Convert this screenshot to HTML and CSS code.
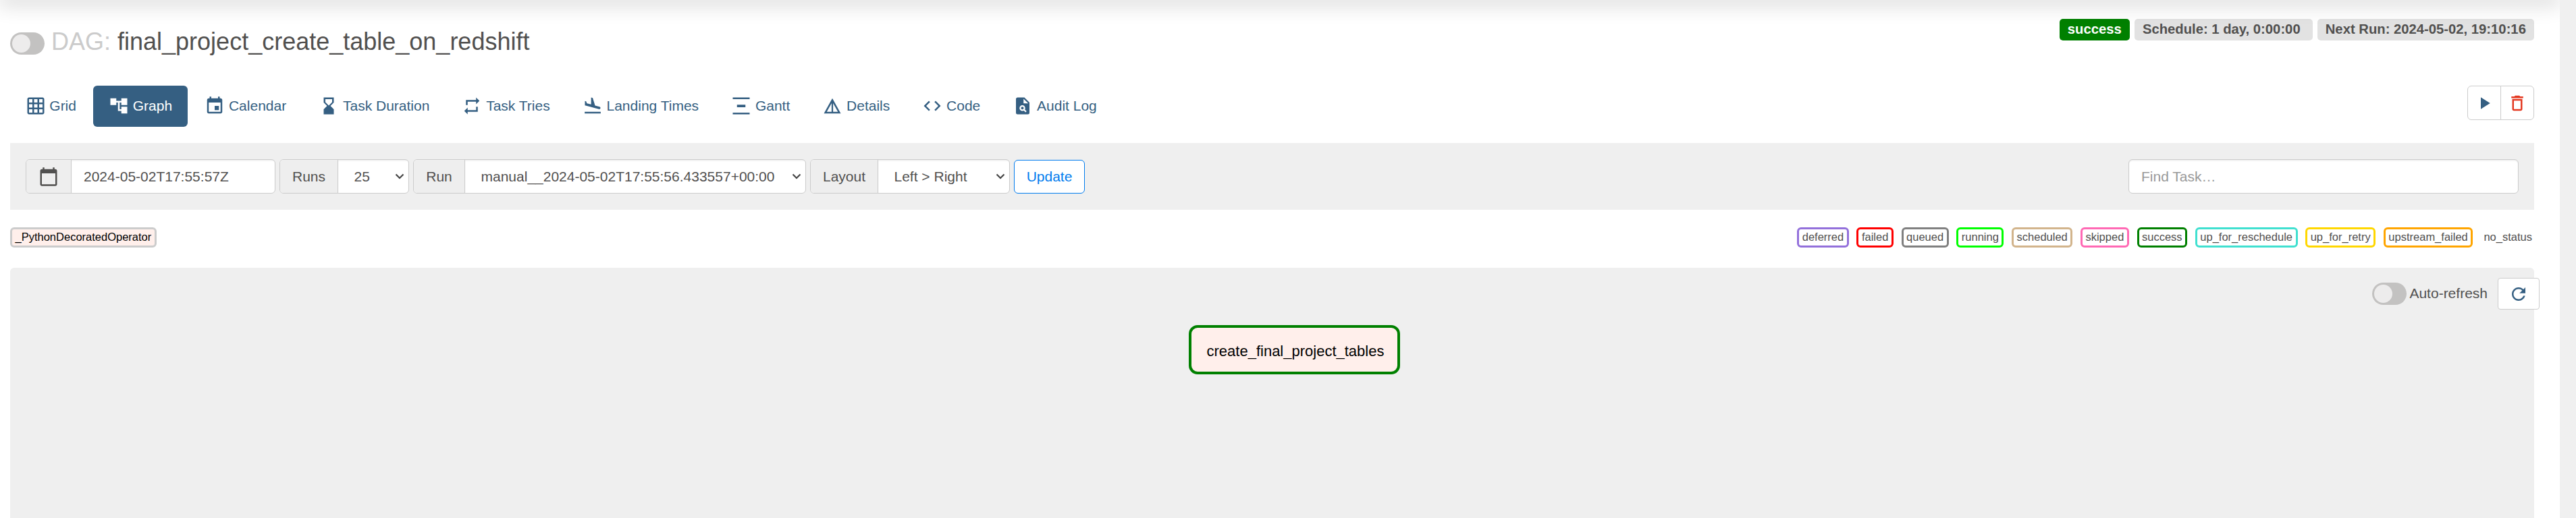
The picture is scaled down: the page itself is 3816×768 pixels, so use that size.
FILE: index.html
```html
<!DOCTYPE html>
<html lang="en">
<head>
<meta charset="utf-8">
<title>final_project_create_table_on_redshift - Graph</title>
<link rel="stylesheet" href="styles.css">
</head>
<body>
<div class="page">
  <div class="top-shadow"></div>
  <header class="head">
    <div class="dag-title">
      <span class="switch"></span>
      <h1 class="dag-name"><span class="muted">DAG:</span> final_project_create_table_on_redshift</h1>
    </div>
    <div class="labels">
      <span class="label label-success">success</span>
      <span class="label label-schedule">Schedule: 1 day, 0:00:00</span>
      <span class="label">Next Run: 2024-05-02, 19:10:16</span>
    </div>
  </header>

  <div class="nav-row">
    <nav class="pills">
      <a class="pill"><svg class="icon" viewBox="0 0 24 24"><path d="M20 2H4c-1.100 0-2 .9-2 2v16c0 1.100.9 2 2 2h16c1.100 0 2-.9 2-2V4c0-1.100-.9-2-2-2zM8 20H4v-4h4v4zm0-6H4v-4h4v4zm0-6H4V4h4v4zm6 12h-4v-4h4v4zm0-6h-4v-4h4v4zm0-6h-4V4h4v4zm6 12h-4v-4h4v4zm0-6h-4v-4h4v4zm0-6h-4V4h4v4z"/></svg>Grid</a>
      <a class="pill active"><svg class="icon" viewBox="0 0 24 24"><path d="M22 11V3h-7v3H9V3H2v8h7V8h2v10h4v3h7v-8h-7v3h-2V8h2v3z"/></svg>Graph</a>
      <a class="pill"><svg class="icon" viewBox="0 0 24 24"><path d="M17 12h-5v5h5v-5zM16 1v2H8V1H6v2H5c-1.110 0-1.990.9-1.990 2L3 19c0 1.100.89 2 2 2h14c1.100 0 2-.9 2-2V5c0-1.100-.9-2-2-2h-1V1h-2zm3 18H5V8h14v11z"/></svg>Calendar</a>
      <a class="pill"><svg class="icon" viewBox="0 0 24 24"><path d="M6 2v6h.01L6 8.010 10 12l-4 4 .01.01H6V22h12v-5.990h-.01L18 16l-4-4 4-3.990-.01-.01H18V2H6zm2 2h8v3.500l-4 4-4-4V4z"/></svg>Task Duration</a>
      <a class="pill"><svg class="icon" viewBox="0 0 24 24"><path d="M7 7h10v3l4-4-4-4v3H5v6h2V7zm10 10H7v-3l-4 4 4 4v-3h12v-6h-2v4z"/></svg>Task Tries</a>
      <a class="pill"><svg class="icon" viewBox="0 0 24 24"><path d="M2.500 19h19v2h-19zm7.180-5.730l4.350 1.160 5.310 1.420c.8.210 1.620-.26 1.840-1.060.21-.8-.26-1.620-1.060-1.840l-5.310-1.420-2.760-9.020L10.120 2v8.280L5.150 8.950l-.93-2.320-1.450-.39v5.170l1.600.43 5.310 1.430z"/></svg>Landing Times</a>
      <a class="pill"><svg class="icon" viewBox="0 0 24 24"><path d="M2 2h20v2H2zM2 20h20v2H2zM7 10.500h10v3H7z"/></svg>Gantt</a>
      <a class="pill"><svg class="icon" viewBox="0 0 24 24"><path d="M12 3L2 21h20L12 3zm.9 5.800L18.600 19h-5.700V8.800zm-1.800 0V19H5.400l5.700-10.200z"/></svg>Details</a>
      <a class="pill"><svg class="icon" viewBox="0 0 24 24"><path d="M9.400 16.600L4.800 12l4.600-4.600L8 6l-6 6 6 6 1.400-1.400zm5.200 0l4.600-4.600-4.600-4.600L16 6l6 6-6 6-1.400-1.400z"/></svg>Code</a>
      <a class="pill"><svg class="icon" viewBox="0 0 24 24"><path d="M14 2H6a2 2 0 0 0-2 2v16a2 2 0 0 0 2 2h12a2 2 0 0 0 2-2V8z"/><path class="cut" d="M13 3.500V9h5.500z"/><circle class="lens" cx="11.600" cy="14.600" r="2.500"/><path class="lens" d="M13.400 16.400l2.600 2.600"/></svg>Audit Log</a>
    </nav>
    <div class="actions">
      <a class="action"><svg class="icon action-icon" viewBox="0 0 24 24"><path d="M8 5v14l11-7z"/></svg></a>
      <a class="action danger"><svg class="icon action-icon" viewBox="0 0 24 24"><path d="M6 19c0 1.100.9 2 2 2h8c1.100 0 2-.9 2-2V7H6v12zM8 9h8v10H8V9zm7.500-5l-1-1h-5l-1 1H5v2h14V4z"/></svg></a>
    </div>
  </div>

  <div class="filters">
    <div class="group group-date"><span class="addon"><svg class="cal" viewBox="0 0 24 24"><path d="M20 3h-1V1h-2v2H7V1H5v2H4c-1.100 0-2 .9-2 2v16c0 1.100.9 2 2 2h16c1.100 0 2-.9 2-2V5c0-1.100-.9-2-2-2zm0 18H4V8h16v13z"/></svg></span><span class="field">2024-05-02T17:55:57Z</span></div>
    <div class="group group-runs"><span class="addon">Runs</span><span class="field select">25<svg class="chev" viewBox="0 0 14 9"><path d="M1.500 1.500L7 7l5.500-5.500"/></svg></span></div>
    <div class="group group-run"><span class="addon">Run</span><span class="field select">manual__2024-05-02T17:55:56.433557+00:00<svg class="chev" viewBox="0 0 14 9"><path d="M1.500 1.500L7 7l5.500-5.500"/></svg></span></div>
    <div class="group group-layout"><span class="addon">Layout</span><span class="field select">Left &gt; Right<svg class="chev" viewBox="0 0 14 9"><path d="M1.500 1.500L7 7l5.500-5.500"/></svg></span></div>
    <a class="update">Update</a>
    <div class="search">Find Task…</div>
  </div>

  <div class="legend">
    <span class="tag operator">_PythonDecoratedOperator</span>
    <div class="states">
      <span class="tag deferred">deferred</span>
      <span class="tag failed">failed</span>
      <span class="tag queued">queued</span>
      <span class="tag running">running</span>
      <span class="tag scheduled">scheduled</span>
      <span class="tag skipped">skipped</span>
      <span class="tag success">success</span>
      <span class="tag reschedule">up_for_reschedule</span>
      <span class="tag retry">up_for_retry</span>
      <span class="tag upstream">upstream_failed</span>
      <span class="tag none">no_status</span>
    </div>
  </div>

  <main class="graph">
    <div class="refresh">
      <span class="switch"></span>
      <span class="refresh-text">Auto-refresh</span>
      <a class="refresh-btn"><svg class="icon refresh-icon" viewBox="0 0 24 24"><path d="M17.650 6.350C16.200 4.900 14.210 4 12 4c-4.420 0-7.990 3.580-7.990 8s3.570 8 7.990 8c3.730 0 6.840-2.550 7.730-6h-2.080c-.82 2.330-3.040 4-5.650 4-3.310 0-6-2.690-6-6s2.690-6 6-6c1.660 0 3.140.69 4.220 1.780L13 11h7V4l-2.350 2.350z"/></svg></a>
    </div>
    <div class="node">create_final_project_tables</div>
  </main>
</div>
</body>
</html>
```
FILE: styles.css
```css
* { box-sizing: border-box; }

body {
  margin: 0;
  height: 768px;
  overflow: hidden;
  background: #f0f0f0;
  font: 21px/30px "Liberation Sans", Arial, sans-serif;
  color: #51504f;
}

.page {
  position: relative;
  width: 3792px;
  height: 768px;
  padding: 0 38px 0 15px;
  background: #fff;
  overflow: hidden;
  display: flex;
  flex-direction: column;
}

.top-shadow {
  position: absolute;
  left: 0;
  right: 0;
  top: -10px;
  height: 10px;
  box-shadow: 0 3px 30px 3px rgba(0, 0, 0, .2);
}

.head {
  height: 127px;
  flex: none;
  display: flex;
  justify-content: space-between;
  align-items: flex-start;
}

.dag-title {
  display: flex;
  align-items: flex-start;
  gap: 10px;
  padding-top: 41px;
}

.dag-name {
  margin: 0;
  font-size: 36px;
  line-height: 41px;
  font-weight: 400;
  white-space: nowrap;
}

.muted { color: #cbcbcb; }

.switch {
  flex: none;
  display: block;
  width: 51px;
  height: 33px;
  padding: 3px;
  border-radius: 17px;
  background: #c3c2c1;
}

.dag-title .switch { margin-top: 7px; }

.switch::before {
  content: "";
  display: block;
  width: 27px;
  height: 27px;
  border-radius: 50%;
  background: #edecec;
}

.labels {
  display: flex;
  gap: 7px;
  padding-top: 28px;
}

.label {
  height: 32px;
  padding: 0 12.1px;
  border-radius: 5px;
  background: #e2e2e2;
  font-size: 20.25px;
  font-weight: 700;
  line-height: 30px;
  white-space: nowrap;
}

.label-success { background: #008000; color: #fff; }
.label-schedule { padding-right: 18px; }

.nav-row {
  height: 85px;
  flex: none;
  display: flex;
  justify-content: space-between;
  align-items: flex-start;
}

.pills { display: flex; gap: 3px; }

.pill {
  height: 61px;
  padding: 0 22.5px 1px;
  border-radius: 6px;
  display: flex;
  align-items: center;
  gap: 5.8px;
  color: #355f82;
  white-space: nowrap;
}

.pill.active { background: #355f82; color: #fff; }

.icon {
  display: block;
  width: 30px;
  height: 30px;
  fill: currentColor;
}

.cut { fill: #fff; }

.lens {
  fill: none;
  stroke: #fff;
  stroke-width: 1.8;
}

.actions { display: flex; }

.action {
  width: 50px;
  height: 51px;
  border: 1px solid #ccc;
  border-radius: 6px 0 0 6px;
  display: flex;
  align-items: center;
  justify-content: center;
  color: #355f82;
}

.action.danger {
  margin-left: -1px;
  border-radius: 0 6px 6px 0;
  color: #e43921;
}

.filters {
  height: 99px;
  flex: none;
  padding: 0 23px;
  display: flex;
  align-items: center;
  gap: 6px;
  background: #efefef;
}

.group {
  height: 51px;
  display: flex;
  border: 1px solid #ccc;
  border-radius: 6px;
  background: #fff;
  overflow: hidden;
}

.group-date { width: 370px; }
.group-runs { width: 192px; }
.group-run { width: 582px; }
.group-layout { width: 296px; }

.addon {
  flex: none;
  display: flex;
  align-items: center;
  justify-content: center;
  width: 67px;
  border-right: 1px solid #ccc;
  background: #eee;
}

.group-runs .addon { width: 86px; }
.group-run .addon { width: 76px; }
.group-layout .addon { width: 100px; }

.cal { width: 30px; height: 30px; fill: #51504f; }

.field {
  flex: 1;
  display: flex;
  align-items: center;
  justify-content: space-between;
  padding: 0 18px;
  box-shadow: inset 0 1.5px 1.5px rgba(0, 0, 0, .075);
  white-space: nowrap;
}

.select { padding: 0 6px 0 23.5px; }

.chev {
  width: 14px;
  height: 9px;
  fill: none;
  stroke: #444;
  stroke-width: 2.2;
}

.update {
  width: 105px;
  height: 50px;
  border: 1.5px solid #017cee;
  border-radius: 6px;
  background: #fff;
  color: #017cee;
  display: flex;
  align-items: center;
  justify-content: center;
}

.search {
  width: 578px;
  height: 51px;
  margin-left: auto;
  padding: 0 18px;
  border: 1px solid #ccc;
  border-radius: 6px;
  background: #fff;
  box-shadow: inset 0 1.5px 1.5px rgba(0, 0, 0, .075);
  line-height: 49px;
  color: #999;
}

.legend {
  height: 86px;
  flex: none;
  padding-top: 26px;
  display: flex;
  justify-content: space-between;
  align-items: flex-start;
}

.states { display: flex; gap: 11.7px; }

.tag {
  height: 30px;
  padding: 0 4.5px;
  border: 3px solid transparent;
  border-radius: 6px;
  font-size: 16.5px;
  line-height: 23px;
  white-space: nowrap;
}

.operator { border-color: #ccc; background: #ffefeb; color: #000; }
.deferred { border-color: mediumpurple; }
.failed { border-color: red; }
.queued { border-color: gray; }
.running { border-color: lime; }
.scheduled { border-color: tan; }
.skipped { border-color: hotpink; }
.success { border-color: green; }
.reschedule { border-color: turquoise; }
.retry { border-color: gold; }
.upstream { border-color: orange; }
.none { padding-right: 0; margin-left: -3px; }

.graph {
  position: relative;
  flex: 1;
  border-radius: 6px 6px 0 0;
  background: #efefef;
}

.refresh {
  position: absolute;
  right: -8px;
  top: 15px;
  display: flex;
  align-items: center;
}

.refresh-text { margin: 0 15px 2px 4px; }

.refresh-btn {
  width: 62px;
  height: 47px;
  border: 1.5px solid #ccc;
  border-radius: 4px;
  background: #fff;
  color: #355f82;
  display: flex;
  align-items: center;
  justify-content: center;
}

.node {
  position: absolute;
  left: 1746px;
  top: 85px;
  width: 313px;
  height: 73px;
  padding-left: 3px;
  border: 4px solid #008000;
  border-radius: 13px;
  background: #ffefeb;
  color: #000;
  font-size: 22px;
  line-height: 69px;
  text-align: center;
  white-space: nowrap;
}
```
